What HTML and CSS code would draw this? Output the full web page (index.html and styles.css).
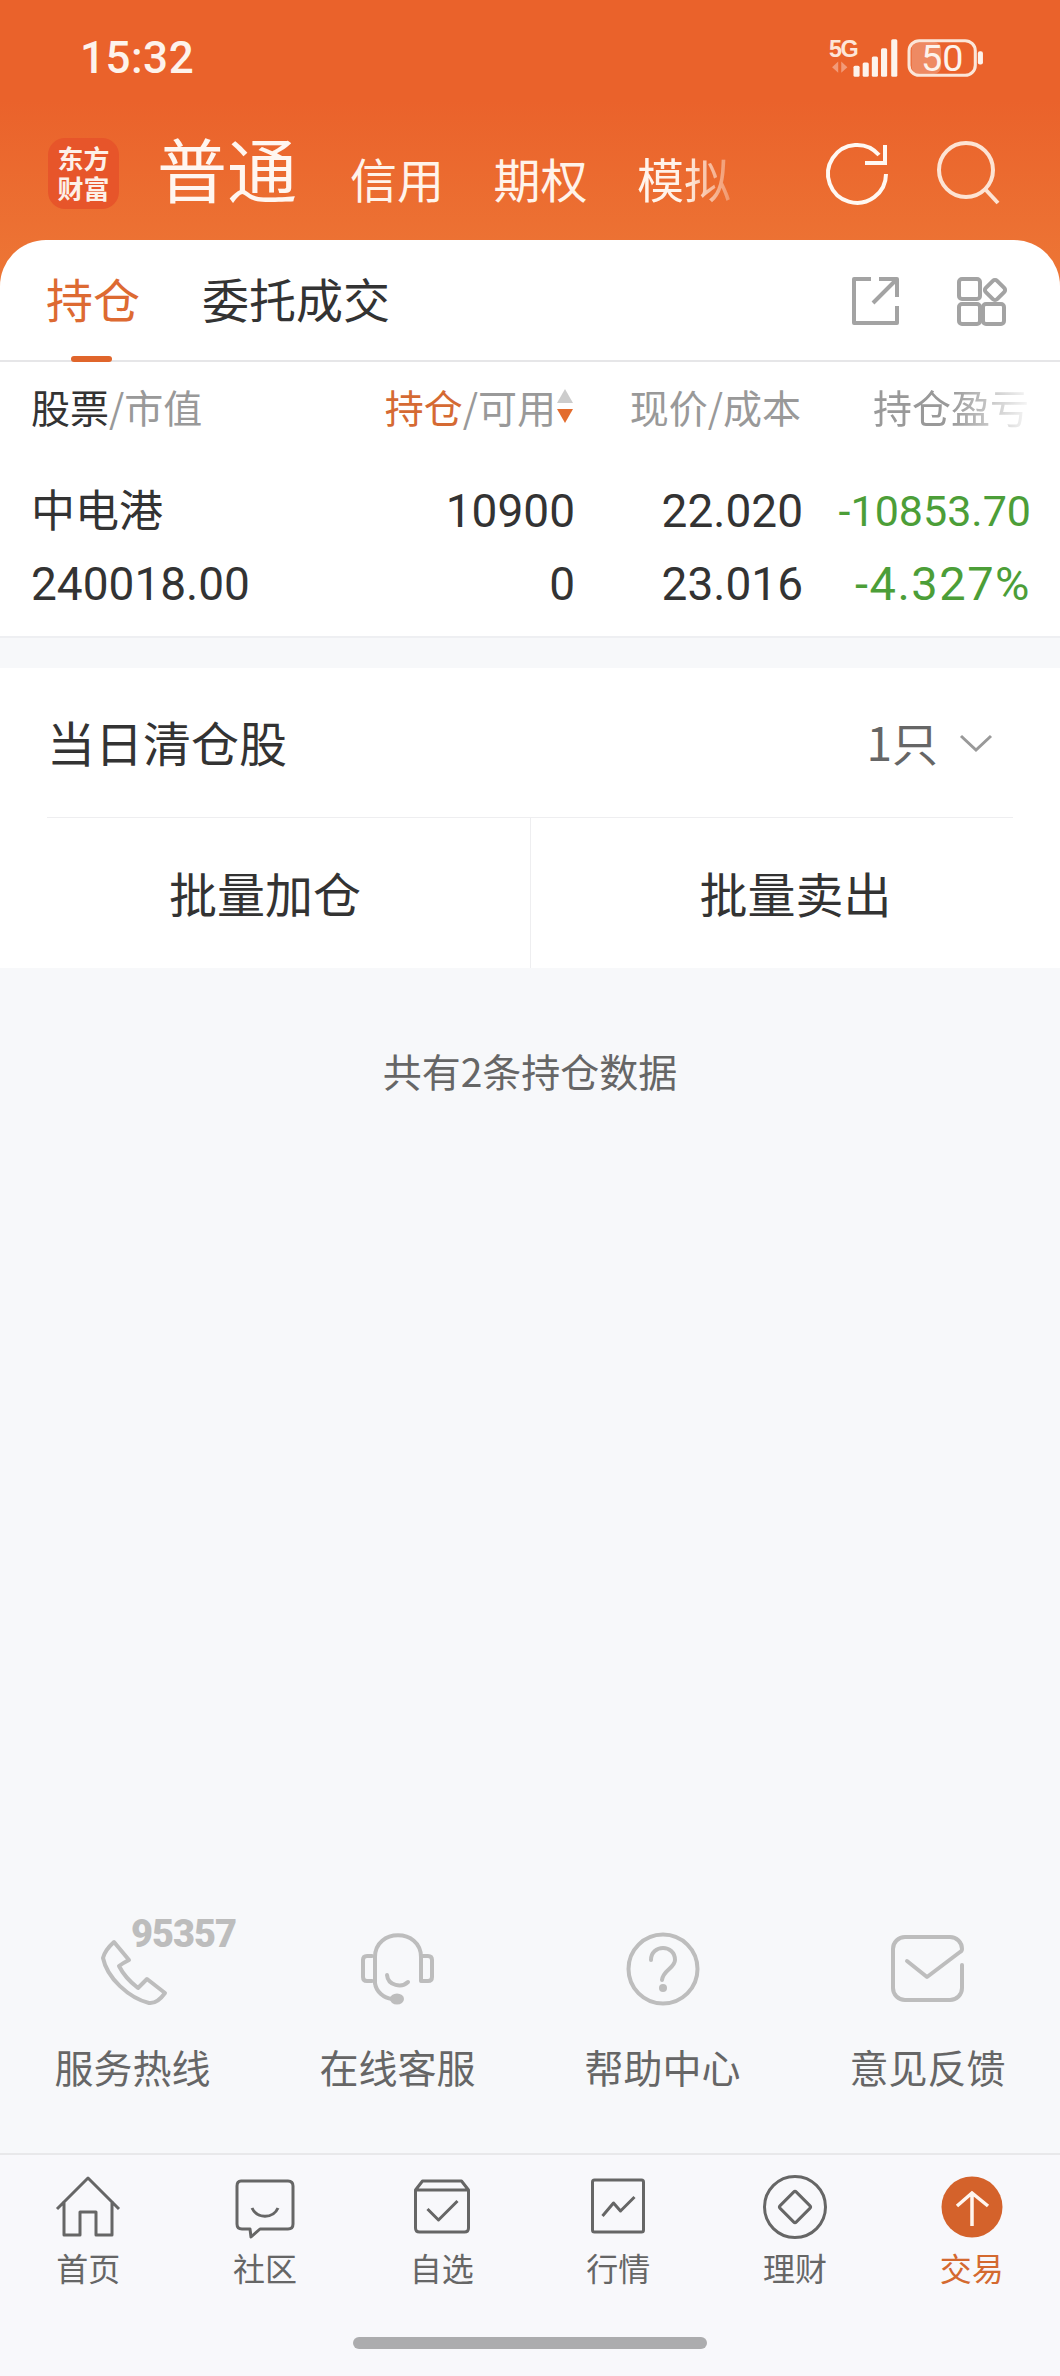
FILE: index.html
```html
<!DOCTYPE html>
<html lang="zh-CN">
<head>
<meta charset="utf-8">
<title>交易</title>
<link rel="stylesheet" href="styles.css">
</head>
<body>
<div class="app">
  <header class="top">
    <div class="status">
      <span class="time">15:32</span>
      <svg class="status-icons" viewBox="825 36 155 44">
        <text class="net" x="826" y="57">5G</text>
        <path class="net-arrows" d="M835 61v11l-6-5.500zM838 61v11l6-5.500z"/>
        <rect class="bar" x="850" y="65" width="6" height="11" rx="1.500"/>
        <rect class="bar" x="859" y="62" width="6" height="14" rx="1.500"/>
        <rect class="bar" x="868" y="56" width="6" height="20" rx="1.500"/>
        <rect class="bar" x="877" y="48" width="6" height="28" rx="1.500"/>
        <rect class="bar" x="887" y="39" width="6" height="37" rx="1.500"/>
        <rect class="batt-fill" x="907" y="42" width="29" height="31" rx="7"/>
        <rect class="batt" x="904.500" y="40.500" width="65" height="34" rx="10"/>
        <text class="batt-text" x="937" y="70">50</text>
        <rect class="bar" x="972" y="51" width="5" height="13" rx="2"/>
      </svg>
    </div>
    <div class="brand-row">
      <div class="logo"><span>东方</span><span>财富</span></div>
      <nav class="accounts">
        <span class="acc-main">普通</span>
        <span class="acc">信用</span>
        <span class="acc">期权</span>
        <span class="acc acc-fade">模拟</span>
      </nav>
      <svg class="top-tools" viewBox="815 136 185 72">
        <path class="tool" d="M881 173A29 29 0 1 1 874 154"/>
        <path class="tool" d="M860 162H880V144"/>
        <circle class="tool tool-soft" cx="961" cy="169" r="27"/>
        <path class="tool tool-soft" d="M980 188L993 202"/>
      </svg>
    </div>
    <div class="tabs">
      <div class="tab tab-on">持仓<i class="tab-mark"></i></div>
      <div class="tab">委托成交</div>
      <svg class="tab-tools" viewBox="840 270 165 60">
        <path class="gtool" d="M865 278H848V322H891V305"/>
        <path class="gtool" d="M873 278H891V296M891 278L867 302"/>
        <rect class="gtool" x="953" y="278" width="21" height="20" rx="3"/>
        <rect class="gtool" x="953" y="303" width="21" height="20" rx="3"/>
        <rect class="gtool" x="977" y="303" width="21" height="20" rx="3"/>
        <rect class="gtool" x="981" y="281" width="16" height="16" rx="3" transform="rotate(45 989 289)"/>
      </svg>
    </div>
  </header>

  <main class="main">
    <section class="holdings">
      <div class="thead">
        <div><span class="dark">股票</span>/市值</div>
        <div class="num sort-head"><span class="accent">持仓</span>/可用<svg class="sort" viewBox="0 0 16 34"><path class="sort-up" d="M8 0L16 14H0z"/><path class="sort-down" d="M0 20H16L8 34z"/></svg></div>
        <div class="num">现价/成本</div>
        <div class="num"><span class="head-fade">持仓盈亏</span></div>
      </div>
      <div class="trow">
        <div class="name">中电港</div>
        <div class="num">10900</div>
        <div class="num">22.020</div>
        <div class="num loss loss-sm">-10853.70</div>
      </div>
      <div class="trow">
        <div>240018.00</div>
        <div class="num">0</div>
        <div class="num">23.016</div>
        <div class="num loss loss-pct">-4.327%</div>
      </div>
    </section>

    <section class="cleared">
      <div class="cleared-row">
        <span class="cleared-title">当日清仓股</span>
        <span class="cleared-count">1只<svg class="chev" viewBox="0 0 34 20"><path d="M2 3L17 17L32 3"/></svg></span>
      </div>
      <div class="batch">
        <div class="batch-btn">批量加仓</div>
        <div class="batch-btn">批量卖出</div>
      </div>
    </section>

    <p class="notice">共有2条持仓数据</p>

    <section class="links">
      <div class="link">
        <span class="hotline">95357</span>
        <svg class="link-icon" viewBox="92 1928 80 80"><path class="ic" d="M113 1942L128 1960Q122 1963 118 1966Q124 1978 137 1988L146 1979L164 1993Q156 2004 148 2003C128 1998 106 1978 102 1958Q104 1950 113 1942Z"/></svg>
        <span>服务热线</span>
      </div>
      <div class="link">
        <svg class="link-icon" viewBox="358 1928 80 80">
          <path class="ic" d="M375 1983V1957C375 1928 421 1928 421 1957V1981"/>
          <path class="ic" d="M375 1983C376 1992 384 1998 392 1999"/>
          <path class="ic" d="M372 1956H367Q363 1956 363 1960V1977Q363 1981 367 1981H372M422 1956H428Q432 1956 432 1960V1977Q432 1981 428 1981H422"/>
          <path class="ic" d="M387 1975C388 1986 402 1988 408 1982"/>
          <ellipse class="ic-fill" cx="397" cy="1999" rx="7" ry="5.500"/>
        </svg>
        <span>在线客服</span>
      </div>
      <div class="link">
        <svg class="link-icon" viewBox="622 1928 80 80">
          <circle class="ic" cx="662" cy="1969" r="34.500"/>
          <path class="ic" d="M650 1960C650 1944 674 1944 674 1960C674 1968 662 1970 661 1980"/>
          <circle class="ic-fill" cx="662" cy="1988" r="4"/>
        </svg>
        <span>帮助中心</span>
      </div>
      <div class="link">
        <svg class="link-icon" viewBox="888 1928 80 80"><path class="ic" d="M962 1965V1988A12 12 0 0 1 950 2000H905A12 12 0 0 1 893 1988V1949A12 12 0 0 1 905 1937H950A12 12 0 0 1 962 1949Q962 1951 960 1952L927 1977L907 1961"/></svg>
        <span>意见反馈</span>
      </div>
    </section>
  </main>

  <footer class="nav">
    <div class="nav-items">
      <div class="nav-item">
        <svg class="nav-icon" viewBox="51 2172 70 70"><path class="ni" d="M55 2209L86 2178L117 2209M62 2201V2235H78V2212H94V2235H110V2201"/></svg>
        <span>首页</span>
      </div>
      <div class="nav-item">
        <svg class="nav-icon" viewBox="225 2172 70 70"><path class="ni" d="M236 2181H283Q288 2181 288 2186V2224Q288 2229 283 2229H255L246 2237L245 2229H237Q232 2229 232 2224V2186Q232 2181 236 2181ZM247 2208C252 2219 268 2219 273 2208"/></svg>
        <span>社区</span>
      </div>
      <div class="nav-item">
        <svg class="nav-icon" viewBox="398.500 2172 70 70"><path class="ni" d="M407 2190H460M407 2190L414 2181H453L460 2190V2228Q460 2232 456 2232H411Q407 2232 407 2228ZM419 2209L430 2220L449 2201"/></svg>
        <span>自选</span>
      </div>
      <div class="nav-item">
        <svg class="nav-icon" viewBox="581.500 2172 70 70"><path class="ni" d="M593 2180H640Q642 2180 642 2182V2230Q642 2232 640 2232H593Q591 2232 591 2230V2182Q591 2180 593 2180ZM601 2216L612 2203L619 2211L633 2197"/></svg>
        <span>行情</span>
      </div>
      <div class="nav-item">
        <svg class="nav-icon" viewBox="756 2172 70 70">
          <circle class="ni" cx="791" cy="2207" r="30.500"/>
          <rect class="ni" x="779.500" y="2195.500" width="23" height="23" rx="2" transform="rotate(45 791 2207)"/>
        </svg>
        <span>理财</span>
      </div>
      <div class="nav-item nav-on">
        <svg class="nav-icon" viewBox="931 2172 70 70">
          <circle class="trade-disc" cx="966" cy="2207" r="30.500"/>
          <path class="trade-arrow" d="M966 2226V2193M951 2206L966 2193L982 2206"/>
        </svg>
        <span>交易</span>
      </div>
    </div>
    <div class="home-bar"></div>
  </footer>
</div>
</body>
</html>
```

FILE: styles.css
```css
* { box-sizing: border-box; }

html, body {
  margin: 0;
  padding: 0;
}

body {
  font-family: "Noto Sans CJK SC", Roboto, sans-serif;
  color: #333;
}

.app {
  width: 1060px;
  height: 2376px;
  display: flex;
  flex-direction: column;
  overflow: hidden;
}

/* header */
.top {
  background: linear-gradient(180deg, #ea622b 0, #ea622b 100px, #ed7736 290px);
  color: #fff;
}

.status {
  height: 116px;
  padding: 0 74px 0 80px;
  display: flex;
  align-items: center;
  justify-content: space-between;
}

.time {
  font-family: Roboto, sans-serif;
  font-size: 44px;
  font-weight: 500;
  letter-spacing: 0.5px;
  color: #fdf3ec;
}

.status-icons {
  width: 158px;
  height: 45px;
}

.net {
  font-family: "Liberation Sans", sans-serif;
  font-size: 23px;
  font-weight: 700;
  letter-spacing: -1.5px;
  fill: #fde6d8;
}

.net-arrows { fill: #f29a78; }
.bar { fill: #fdf3ec; }
.batt-fill { fill: #ee8a63; }

.batt {
  fill: none;
  stroke: #fbe6d9;
  stroke-width: 3px;
}

.batt-text {
  font-family: Roboto, sans-serif;
  font-size: 37px;
  text-anchor: middle;
  fill: #fdf3ec;
}

.brand-row {
  height: 124px;
  padding: 0 55px 0 48px;
  display: flex;
  align-items: center;
}

.logo {
  width: 71px;
  height: 71px;
  flex: none;
  border-radius: 17px;
  background: #e7552a;
  display: flex;
  flex-direction: column;
  align-items: center;
  justify-content: center;
  font-size: 26px;
  line-height: 30px;
  font-weight: 700;
  color: #fdf0e8;
  margin-top: -10px;
}

.accounts {
  margin-left: 38px;
  margin-top: -21px;
  display: flex;
  align-items: baseline;
  flex: 1;
}

.acc-main {
  font-size: 70px;
  line-height: 80px;
  font-weight: 400;
  margin-right: 53px;
  color: #fff6f0;
}

.acc {
  font-size: 47px;
  line-height: 60px;
  margin-right: 49.500px;
  color: #fff3ea;
}

.acc-fade {
  -webkit-mask-image: linear-gradient(90deg, #000 50%, rgba(0, 0, 0, 0.3) 100%);
  mask-image: linear-gradient(90deg, #000 50%, rgba(0, 0, 0, 0.3) 100%);
}

.top-tools {
  width: 185px;
  height: 72px;
  flex: none;
  margin-top: -10px;
}

.tool {
  fill: none;
  stroke: #fff8f2;
  stroke-width: 4px;
}

.tool-soft { stroke: #fde3d3; }

.tabs {
  height: 122px;
  background: #fff;
  border-radius: 46px 46px 0 0;
  border-bottom: 2px solid #e6e6e8;
  display: flex;
  align-items: center;
  padding: 0 60px 5px 46px;
  color: #333;
}

.tab {
  position: relative;
  font-size: 47px;
  line-height: 60px;
  margin-right: 62px;
}

.tab-on { color: #dd6a32; }

.tab-mark {
  position: absolute;
  left: 25px;
  top: 88px;
  width: 41px;
  height: 6px;
  border-radius: 3px;
  background: #e0652b;
}

.tab-tools {
  width: 165px;
  height: 60px;
  margin-left: auto;
  margin-right: -11px;
  margin-top: 6px;
}

.gtool {
  fill: none;
  stroke: #a3a3a3;
  stroke-width: 4px;
  stroke-linejoin: round;
}

/* main */
.main {
  flex: 1;
  background: #f7f8fa;
  display: flex;
  flex-direction: column;
}

.holdings {
  background: #fff;
  padding: 0 29px 16px 31px;
  border-bottom: 2px solid #eeeff2;
}

.thead,
.trow {
  display: grid;
  grid-template-columns: 1fr 228px 228px 228px;
  align-items: center;
}

.thead {
  height: 96px;
  padding: 0 2px 9px 0;
  font-size: 39px;
  color: #999;
  margin-bottom: 16px;
}

.dark { color: #333; }
.accent { color: #d56a33; }

.trow {
  height: 73px;
  font-family: Roboto, sans-serif;
  font-size: 46px;
  color: #333;
}

.num {
  text-align: right;
}

.sort-head {
  display: flex;
  justify-content: flex-end;
  align-items: center;
}

.sort {
  width: 16px;
  height: 34px;
  margin-left: 1px;
}

.sort-up { fill: #ccc; }
.sort-down { fill: #e36c2e; }

.head-fade {
  -webkit-mask-image: linear-gradient(90deg, #000 50%, rgba(0, 0, 0, 0.08) 100%);
  mask-image: linear-gradient(90deg, #000 50%, rgba(0, 0, 0, 0.08) 100%);
}

.name {
  font-family: "Noto Sans CJK SC", sans-serif;
  font-size: 44px;
  padding-bottom: 6px;
}

.loss { color: #4c9e38; }
.loss-sm { font-size: 43px; }

.loss-pct {
  font-size: 47px;
  letter-spacing: 1.500px;
}

.cleared {
  margin-top: 30px;
  background: #fff;
}

.cleared-row {
  height: 150px;
  margin: 0 47px;
  padding-right: 20px;
  border-bottom: 1px solid #eeeef0;
  display: flex;
  align-items: center;
  justify-content: space-between;
}

.cleared-title {
  font-size: 48px;
  color: #333;
  margin-bottom: 4px;
}

.cleared-count {
  display: flex;
  align-items: center;
  font-size: 46px;
  color: #666;
  margin-bottom: 4px;
}

.chev {
  width: 34px;
  height: 20px;
  margin-left: 21px;
  margin-top: 4px;
}

.chev path {
  fill: none;
  stroke: #999;
  stroke-width: 3px;
}

.batch {
  display: grid;
  grid-template-columns: 1fr 1fr;
  height: 150px;
}

.batch-btn {
  display: flex;
  align-items: center;
  justify-content: center;
  font-size: 48px;
  color: #333;
  padding-bottom: 3px;
}

.batch-btn + .batch-btn {
  border-left: 1px solid #eeeef0;
}

.notice {
  margin: 72px 0 0;
  text-align: center;
  font-size: 39px;
  line-height: 60px;
  color: #666;
}

.links {
  margin-top: auto;
  display: grid;
  grid-template-columns: repeat(4, 265px);
  padding-bottom: 62px;
}

.link {
  position: relative;
  display: flex;
  flex-direction: column;
  align-items: center;
  font-size: 39px;
  line-height: 50px;
  color: #666;
}

.link-icon {
  width: 80px;
  height: 80px;
  margin-bottom: 33px;
}

.ic {
  fill: none;
  stroke: #bdbdbd;
  stroke-width: 4px;
  stroke-linejoin: round;
  stroke-linecap: round;
}

.ic-fill { fill: #bdbdbd; }

.hotline {
  position: absolute;
  left: 131px;
  top: -13px;
  font-family: Roboto, sans-serif;
  font-size: 38px;
  line-height: 38px;
  font-weight: 900;
  letter-spacing: -1px;
  color: #bdbdbd;
}

/* bottom nav */
.nav {
  height: 223px;
  background: #f8f8fb;
  border-top: 2px solid #e8e8ea;
  display: flex;
  flex-direction: column;
  align-items: center;
}

.nav-items {
  width: 100%;
  display: grid;
  grid-template-columns: repeat(6, 1fr);
  padding-top: 17px;
}

.nav-item {
  display: flex;
  flex-direction: column;
  align-items: center;
  font-size: 32px;
  line-height: 40px;
  color: #666;
}

.nav-icon {
  width: 70px;
  height: 70px;
  margin-bottom: 5px;
}

.ni {
  fill: none;
  stroke: #666;
  stroke-width: 3px;
  stroke-linejoin: round;
}

.nav-on { color: #d4692f; }
.trade-disc { fill: #d4622b; }

.trade-arrow {
  fill: none;
  stroke: #fff6ef;
  stroke-width: 3.500px;
}

.home-bar {
  width: 354px;
  height: 12px;
  margin-top: 50px;
  border-radius: 6px;
  background: #acacae;
}
```
